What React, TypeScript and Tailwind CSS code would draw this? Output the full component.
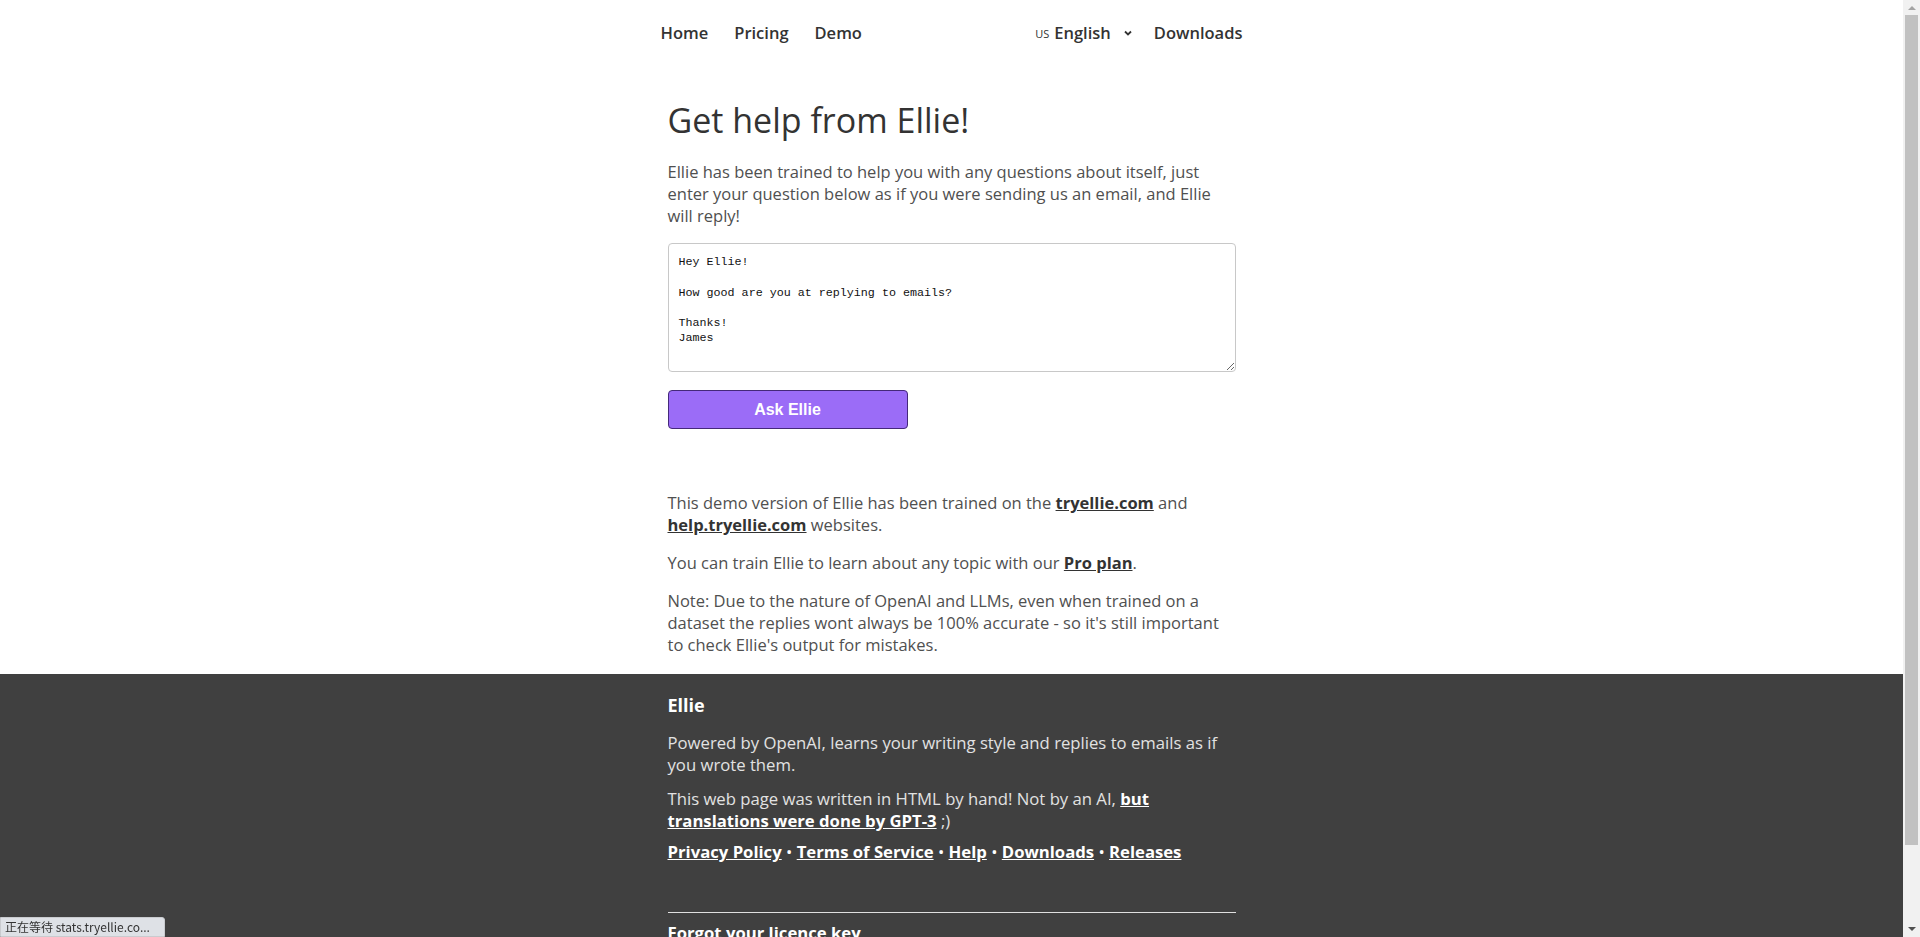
import { useState } from "react";

const msg = `Hey Ellie!

How good are you at replying to emails?

Thanks!
James`;

export default function App() {
  const [text, setText] = useState(msg);

  return (
    <div className="mr-[17px] bg-white font-['Open_Sans',sans-serif] text-[#3d3d3d]">
      {/* Top nav */}
      <nav className="mx-auto flex h-[66px] w-[582px] items-center justify-between text-[16.5px] font-semibold text-[#333]">
        <div className="flex items-center gap-[26px]">
          <a href="#">Home</a>
          <a href="#">Pricing</a>
          <a href="#">Demo</a>
        </div>
        <div className="flex items-center">
          <button className="flex items-center text-[#333]">
            <span className="mr-[5px] mt-[3px] text-[11px] font-normal">US</span>
            <span className="text-[16.5px] font-semibold">English</span>
            <svg className="ml-[12px] h-[10px] w-[10px]" viewBox="0 0 10 10" fill="none" stroke="currentColor" strokeWidth={1.8}>
              <path d="M2 3.5l3 3 3-3" />
            </svg>
          </button>
          <a href="#" className="ml-[21px]">Downloads</a>
        </div>
      </nav>

      {/* Main */}
      <main className="mx-auto w-[568px] pb-[18px] text-[16.5px] leading-[22px] text-[#505050]">
        <h1 className="mt-[33px] text-[34px] font-medium leading-[43px] text-[#333]">Get help from Ellie!</h1>
        <p className="mt-[19px]">
          Ellie has been trained to help you with any questions about itself, just enter your question below as if you were sending us an email, and Ellie will reply!
        </p>
        <textarea
          value={text}
          onChange={(e) => setText(e.target.value)}
          className="mt-[16px] block h-[129px] w-full rounded-[4px] border border-[#c8c8c8] px-[10px] pb-[9px] pt-[11px] font-['Liberation_Mono',monospace] text-[11.7px] leading-[15.3px] text-[#111] outline-none"
        />
        <button className="mt-[18px] block h-[39px] w-[240px] rounded-[4px] border border-[#45297a] bg-[#9b6cf7] font-['Liberation_Sans',sans-serif] text-[16px] font-bold text-white">
          Ask Ellie
        </button>

        <p className="mt-[63px]">
          This demo version of Ellie has been trained on the{" "}
          <a href="#" className="font-bold text-[#333] underline">tryellie.com</a> and{" "}
          <a href="#" className="font-bold text-[#333] underline">help.tryellie.com</a> websites.
        </p>
        <p className="mt-[16px]">
          You can train Ellie to learn about any topic with our{" "}
          <a href="#" className="font-bold text-[#333] underline">Pro plan</a>.
        </p>
        <p className="mt-[16px]">
          Note: Due to the nature of OpenAI and LLMs, even when trained on a dataset the replies wont always be 100% accurate - so it's still important to check Ellie's output for mistakes.
        </p>
      </main>

      {/* Footer */}
      <footer className="bg-[#404040] pb-[40px] pt-[20px] text-[16.7px] leading-[22px] text-[#e2e2e2]">
        <div className="mx-auto w-[568px]">
          <h3 className="text-[18px] font-bold text-white">Ellie</h3>
          <p className="mt-[16px]">Powered by OpenAI, learns your writing style and replies to emails as if you wrote them.</p>
          <p className="mt-[12px]">
            This web page was written in HTML by hand! Not by an AI,{" "}
            <a href="#" className="font-bold text-white underline">
              but
              <br />
              translations were done by GPT-3
            </a>{" "}
            ;)
          </p>
          <p className="mt-[9px] font-bold text-white">
            <a href="#" className="underline">Privacy Policy</a> <span className="font-normal">•</span>{" "}
            <a href="#" className="underline">Terms of Service</a> <span className="font-normal">•</span>{" "}
            <a href="#" className="underline">Help</a> <span className="font-normal">•</span>{" "}
            <a href="#" className="underline">Downloads</a> <span className="font-normal">•</span>{" "}
            <a href="#" className="underline">Releases</a>
          </p>
          <hr className="mt-[49px] border-t border-[#e0e0e0]" />
          <p className="mt-[9px] font-bold text-white">
            <a href="#" className="underline">Forgot your licence key</a>
          </p>
        </div>
      </footer>

      {/* Browser scrollbar */}
      <div className="fixed right-0 top-0 flex h-screen w-[17px] flex-col items-center bg-[#f1f1f1]">
        <svg className="mt-[4px] h-[8px] w-[8px]" viewBox="0 0 8 8" fill="#a3a3a3"><path d="M0 6L4 2l4 4z" /></svg>
        <div className="mt-[3px] h-[830px] w-[13px] bg-[#c1c1c1]" />
        <div className="flex-1" />
        <svg className="mb-[4px] h-[8px] w-[8px]" viewBox="0 0 8 8" fill="#505050"><path d="M0 2l4 4 4-4z" /></svg>
      </div>

      {/* Status bubble */}
      <div className="fixed bottom-0 left-0 h-[20px] w-[165px] rounded-tr-[3px] border border-[#c9cbcf] bg-[#dee1e6] px-[4px] font-['Noto_Sans_CJK_SC',sans-serif] text-[12px] leading-[18px] text-[#333]">
        正在等待 stats.tryellie.co...
      </div>
    </div>
  );
}
